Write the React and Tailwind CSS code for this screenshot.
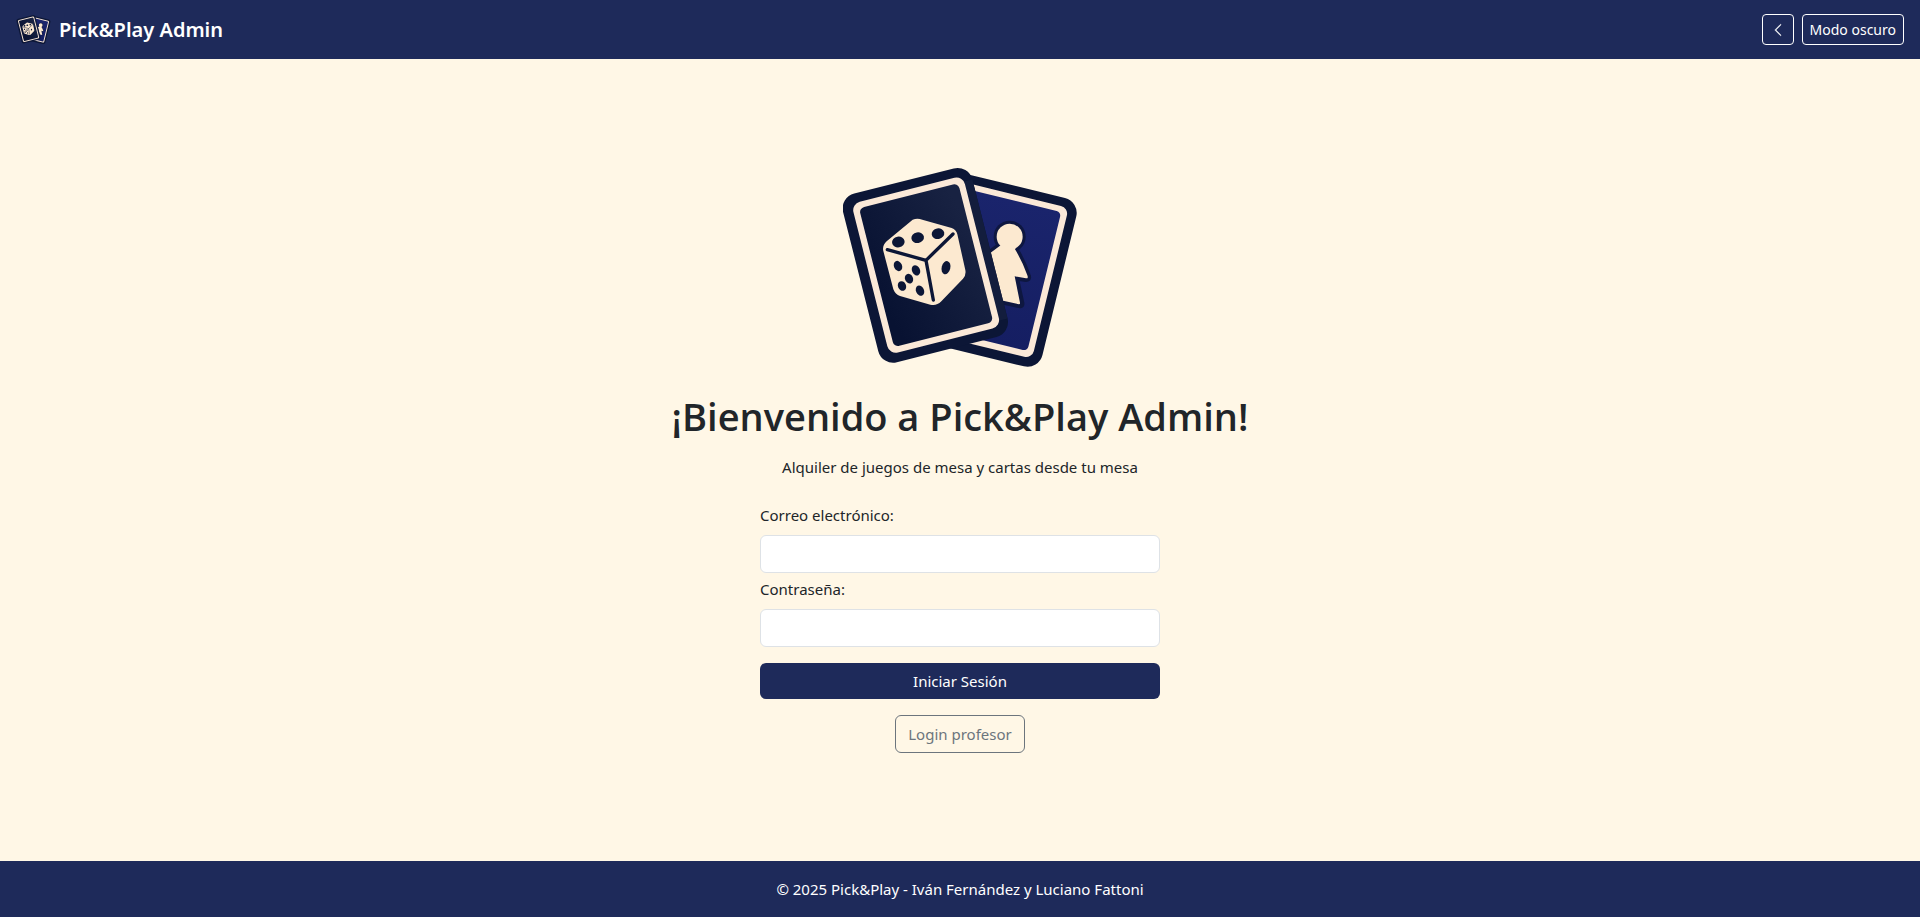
import { BsChevronLeft } from "react-icons/bs";

function CardsLogo({ className, id }) {
  return (
    <svg viewBox="39 36 702 600" className={className} role="img" aria-label="Pick&Play">
      <defs>
        <linearGradient id={id + "-front"} x1="0" y1="0.7" x2="1" y2="0.3">
          <stop offset="0" stopColor="#081232" />
          <stop offset="1" stopColor="#182242" />
        </linearGradient>
        <linearGradient id={id + "-back"} x1="0" y1="0" x2="0" y2="1">
          <stop offset="0" stopColor="#1a246c" />
          <stop offset="1" stopColor="#151e62" />
        </linearGradient>
      </defs>
      <g transform="translate(494 344) rotate(13.7)">
        <rect x="-200" y="-259" width="400" height="520" rx="46" fill="#0c1636" />
        <rect x="-172" y="-233" width="344" height="466" rx="24" fill="#fbe9d8" />
        <rect x="-153" y="-215" width="306" height="429" rx="14" fill={"url(#" + id + "-back)"} />
      </g>
      <path
        d="M512 271 L470 302 L506 436 L571 450 Q574 450 573 444 L556 366 L588 371 Q596 371 592 362 Q578 320 555 283 L563 273 Z"
        fill="#0e1740" stroke="#0e1740" strokeWidth="20" strokeLinejoin="round"
      />
      <circle cx="539" cy="245" r="48" fill="#0e1740" />
      <path
        d="M512 271 L470 302 L506 434 L567 448 Q571 448 570 443 L554 364 L588 370 Q596 371 592 361 Q578 320 555 283 L563 270 Z"
        fill="#fce9d0"
      />
      <circle cx="539" cy="245" r="39" fill="#fce9d0" />
      <g transform="translate(286 331) rotate(-14.2)">
        <rect x="-200" y="-261" width="400" height="522" rx="46" fill="#0c1636" />
        <rect x="160" y="-215" width="40" height="430" fill="#131d3d" />
        <rect x="-170" y="-233" width="345" height="466" rx="26" fill="#fbe9d8" />
        <rect x="-151" y="-215" width="307" height="430" rx="16" fill={"url(#" + id + "-front)"} />
      </g>
      <path
        d="M248 194 Q262 189 277 194 L365 219 Q379 224 382 238 L406 345 Q409 360 399 371 L334 439 Q319 454 301 449 L210 423 Q196 418 190 403 L160 288 Q156 272 170 259 Z"
        fill="#fce9d0"
      />
      <path d="M172 284 L288 316 L369 237 M288 316 L310 435" fill="none" stroke="#0c1636" strokeWidth="10" strokeLinecap="round" strokeLinejoin="round" />
      <g fill="#0c1636">
        <ellipse cx="205" cy="261" rx="19" ry="16" transform="rotate(-10 205 261)" />
        <ellipse cx="263" cy="248" rx="19" ry="16" transform="rotate(-10 263 248)" />
        <ellipse cx="324" cy="236" rx="19" ry="16" transform="rotate(-10 324 236)" />
        <ellipse cx="348" cy="338" rx="13" ry="20" transform="rotate(14 348 338)" />
        <ellipse cx="204" cy="333" rx="12" ry="16" transform="rotate(-25 204 333)" />
        <ellipse cx="258" cy="346" rx="12" ry="16" transform="rotate(-25 258 346)" />
        <ellipse cx="237" cy="371" rx="12" ry="15" transform="rotate(-25 237 371)" />
        <ellipse cx="216" cy="393" rx="12" ry="15" transform="rotate(-25 216 393)" />
        <ellipse cx="270" cy="407" rx="12" ry="16" transform="rotate(-25 270 407)" />
      </g>
    </svg>
  );
}

function Field({ id, label, type }) {
  return (
    <div className="flex flex-col gap-2">
      <label htmlFor={id}>{label}</label>
      <input id={id} type={type} className="h-[38px] w-full rounded-md border border-[#dee2e6] bg-white px-3" />
    </div>
  );
}

export default function App() {
  return (
    <div className="flex min-h-screen flex-col bg-[#fff7e6] font-['Noto_Sans',sans-serif] text-[15px] leading-6 text-[#212529]">
      <header className="flex h-[59px] items-center justify-between bg-[#1e2a5a] px-4 text-white">
        <a href="#" className="flex items-center gap-2">
          <CardsLogo id="brand" className="h-[29px] w-[35px]" />
          <span className="text-[20px] font-semibold">Pick&amp;Play Admin</span>
        </a>
        <div className="flex gap-2">
          <button type="button" aria-label="Volver" className="flex h-[31px] w-8 items-center justify-center rounded border border-white">
            <BsChevronLeft className="size-3.5" strokeWidth={0.5} />
          </button>
          <button type="button" className="h-[31px] rounded border border-white px-[7px] text-[14px] leading-5">
            Modo oscuro
          </button>
        </div>
      </header>

      <main className="flex flex-1 flex-col items-center justify-center">
        <CardsLogo id="hero" className="h-[200px] w-[234px]" />
        <h1 className="mt-6 text-center font-['Open_Sans',sans-serif] text-[38px] leading-[50px] font-semibold">¡Bienvenido a Pick&amp;Play Admin!</h1>
        <p className="mt-3.5">Alquiler de juegos de mesa y cartas desde tu mesa</p>
        <form className="mt-6 flex w-full max-w-[400px] flex-col" onSubmit={(e) => e.preventDefault()}>
          <div className="flex flex-col gap-1">
            <Field id="email" label="Correo electrónico:" type="email" />
            <Field id="password" label="Contraseña:" type="password" />
          </div>
          <button type="submit" className="mt-4 h-9 rounded-md bg-[#1e2a5a] text-white">
            Iniciar Sesión
          </button>
        </form>
        <button type="button" className="mt-4 h-[38px] rounded-md border border-[#6c757d] px-3 text-[#6c757d]">
          Login profesor
        </button>
      </main>

      <footer className="flex h-14 items-center justify-center bg-[#1e2a5a] text-white">
        <p>© 2025 Pick&amp;Play - Iván Fernández y Luciano Fattoni</p>
      </footer>
    </div>
  );
}
